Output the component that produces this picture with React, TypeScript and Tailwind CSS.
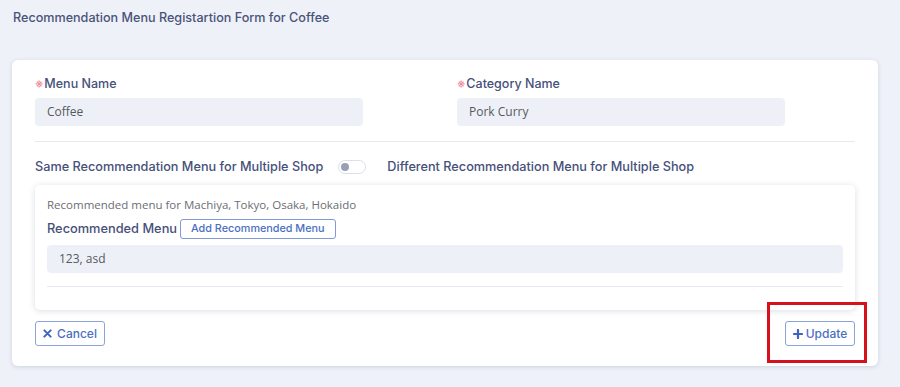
import React from 'react';

const label = "font-['Inter','Liberation_Sans',sans-serif]";
const body = "font-['Open_Sans','Liberation_Sans',sans-serif]";

const Required = () => <span className="text-[12px] text-[#f08a9a] mr-[1px]">※</span>;

const Field: React.FC<{ title: string; value: string }> = ({ title, value }) => (
  <div className="flex flex-col">
    <div className={`${label} flex items-center h-[18px] text-[12.5px] font-medium text-[#46507a]`}>
      <Required />
      {title}
    </div>
    <div className={`${body} mt-[5px] w-[328px] h-[28px] rounded-[4px] bg-[#edf1f7] px-3 flex items-center text-[12px] text-[#55595f]`}>
      {value}
    </div>
  </div>
);

export default function App() {
  return (
    <div className={`${label} relative w-[900px] h-[387px] bg-[#eef1f8] overflow-hidden`}>
      <div className="px-[13px] pt-[9px] h-[60px] text-[12.6px] font-medium text-[#4a5479]">
        Recommendation Menu Registartion Form for Coffee
      </div>

      <div className="ml-[12px] mr-[22px] h-[306px] bg-white rounded-[6px] shadow-[0_1px_4px_rgba(60,70,110,0.18)] px-[23px] pt-[15px]">
        <div className="grid grid-cols-[410px_410px] gap-[12px]">
          <Field title="Menu Name" value="Coffee" />
          <Field title="Category Name" value="Pork Curry" />
        </div>
        <div className="mt-[15px] h-px bg-[#e6e9ef]" />

        <div className="flex items-center h-[40px] pt-[9px] text-[12.7px] font-medium text-[#46507a]">
          <span>Same Recommendation Menu for Multiple Shop</span>
          <span className="ml-[15px] w-[28px] h-[14px] rounded-full border border-[#dcdfe6] bg-white flex items-center px-[2px]">
            <span className="w-[8px] h-[8px] rounded-full bg-[#9aa0b4]" />
          </span>
          <span className="ml-[21px]">Different Recommendation Menu for Multiple Shop</span>
        </div>

        <div className="mt-[3px] h-[125px] rounded-[5px] bg-white shadow-[0_1px_6px_rgba(60,70,110,0.18)] px-[12px] pt-[12px]">
          <div className={`${body} h-[16px] flex items-center text-[11.5px] text-[#6b6e74]`}>
            Recommended menu for Machiya, Tokyo, Osaka, Hokaido
          </div>
          <div className="mt-[6px] flex items-center gap-[3px]">
            <span className="text-[12.8px] font-medium text-[#46507a]">Recommended Menu</span>
            <button className="h-[20px] px-[10px] rounded-[3px] border border-[#7f9ad6] text-[10.8px] font-medium text-[#4a6fc2] bg-white">
              Add Recommended Menu
            </button>
          </div>
          <div className={`${body} mt-[6px] h-[28px] rounded-[4px] bg-[#edf1f7] px-[12px] flex items-center text-[12px] text-[#55595f]`}>
            123, asd
          </div>
          <div className="mt-[13px] h-px bg-[#e6e9ef]" />
        </div>

        <div className="mt-[11px] flex items-center justify-between">
          <button className="h-[25px] w-[70px] rounded-[3px] border border-[#8aa3db] text-[12px] font-medium text-[#4a6fc2] flex items-center justify-center gap-[5px]">
            <svg width="9" height="9" viewBox="0 0 10 10"><path d="M1.5 1.5L8.5 8.5M8.5 1.5L1.5 8.5" stroke="#3f63bd" strokeWidth="2.2" strokeLinecap="round" /></svg>
            Cancel
          </button>
          <button className="h-[25px] w-[70px] rounded-[3px] border border-[#8aa3db] text-[12px] font-medium text-[#4a6fc2] flex items-center justify-center gap-[3px]">
            <svg width="10" height="10" viewBox="0 0 10 10"><path d="M5 1V9M1 5H9" stroke="#3f63bd" strokeWidth="2.2" strokeLinecap="round" /></svg>
            Update
          </button>
        </div>
      </div>

      <div className="absolute left-[767px] top-[302px] w-[100px] h-[61px] border-[3px] border-[#d7101b]" />
    </div>
  );
}
